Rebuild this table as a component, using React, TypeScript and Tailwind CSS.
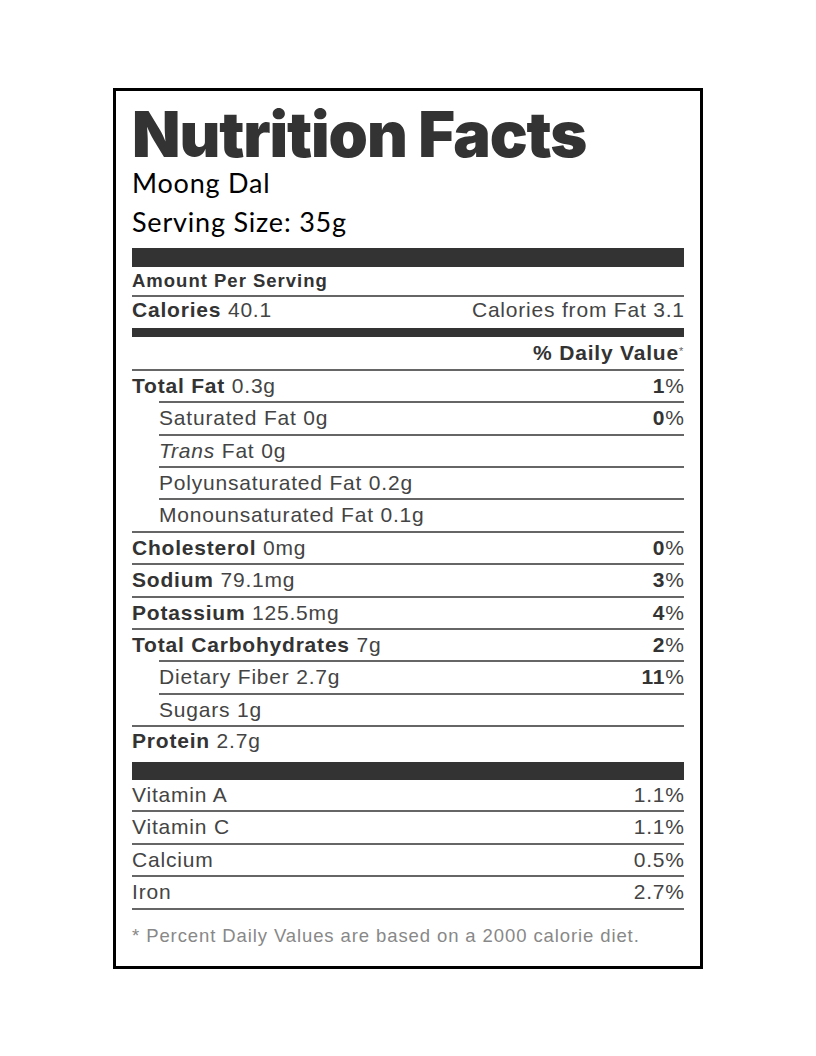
import React from "react";

type Nutrient = {
  label: string;
  amount: string;
  dv?: string;
  bold?: boolean;
  indent?: boolean;
  italicPrefix?: string;
};

const nutrients: Nutrient[] = [
  { label: "Total Fat", amount: "0.3g", dv: "1", bold: true },
  { label: "Saturated Fat", amount: "0g", dv: "0", indent: true },
  { label: "Fat", amount: "0g", indent: true, italicPrefix: "Trans" },
  { label: "Polyunsaturated Fat", amount: "0.2g", indent: true },
  { label: "Monounsaturated Fat", amount: "0.1g", indent: true },
  { label: "Cholesterol", amount: "0mg", dv: "0", bold: true },
  { label: "Sodium", amount: "79.1mg", dv: "3", bold: true },
  { label: "Potassium", amount: "125.5mg", dv: "4", bold: true },
  { label: "Total Carbohydrates", amount: "7g", dv: "2", bold: true },
  { label: "Dietary Fiber", amount: "2.7g", dv: "11", indent: true },
  { label: "Sugars", amount: "1g", indent: true },
];

const vitamins = [
  { label: "Vitamin A", dv: "1.1%" },
  { label: "Vitamin C", dv: "1.1%" },
  { label: "Calcium", dv: "0.5%" },
  { label: "Iron", dv: "2.7%" },
];

const NutrientRow = ({ n }: { n: Nutrient }) => (
  <div
    className={`flex justify-between h-[32.36px] leading-[30.36px] border-t-2 border-[#666] ${
      n.indent ? "ml-[27px]" : ""
    }`}
  >
    <span className="text-[#444]">
      {n.italicPrefix && <i>{n.italicPrefix} </i>}
      {n.bold ? <b className="text-[#333]">{n.label}</b> : n.label} {n.amount}
    </span>
    {n.dv && (
      <span className="-mr-[0.8px]">
        <b className="text-[#333]">{n.dv}</b>
        <span className="text-[#444]">%</span>
      </span>
    )}
  </div>
);

export default function App() {
  return (
    <div className="min-h-[1056px] bg-white pt-[88px]">
      <div className="mx-auto w-[590px] border-[3px] border-black px-[16px] pt-[13px] pb-[18px] font-['Liberation_Sans',Arial,sans-serif] text-[21px] tracking-[0.8px]">
        <h1 className="h-[59px] leading-[60px] text-[63px] font-black tracking-[-1.1px] text-[#333] font-['Inter',sans-serif] whitespace-nowrap">
          Nutrition Facts
        </h1>
        <div className="font-['Lato',sans-serif] text-[27px] leading-[39px] tracking-[0.8px] text-black">
          <div>Moong Dal</div>
          <div>Serving Size: 35g</div>
        </div>

        <div className="mt-[7px] h-[19px] bg-[#333]" />

        <div className="h-[30px] leading-[28px] border-b-2 border-[#666] text-[18.5px] tracking-[1px] font-bold text-[#333]">
          Amount Per Serving
        </div>
        <div className="flex justify-between h-[31px] leading-[26px]">
          <span className="text-[#444]">
            <b className="text-[#333]">Calories</b> 40.1
          </span>
          <span className="text-[#444] -mr-[0.8px]">Calories from Fat 3.1</span>
        </div>
        <div className="h-[9px] bg-[#333]" />

        <div className="flex justify-end h-[32px] leading-[31px] font-bold text-[#333]">
          <span>
            % Daily Value
            <sup className="text-[11px] font-normal text-[#666] relative -top-[5px]">*</sup>
          </span>
        </div>

        {nutrients.map((n) => (
          <NutrientRow key={n.label + (n.italicPrefix ?? "")} n={n} />
        ))}

        <div className="h-[37px] leading-[27px] border-t-2 border-[#666] text-[#444]">
          <b className="text-[#333]">Protein</b> 2.7g
        </div>
        <div className="h-[18px] bg-[#333]" />

        {vitamins.map((v) => (
          <div
            key={v.label}
            className="flex justify-between h-[32.4px] leading-[30px] border-b-2 border-[#666] text-[#444]"
          >
            <span>{v.label}</span>
            <span className="-mr-[0.8px]">{v.dv}</span>
          </div>
        ))}

        <p className="pt-[14px] text-[18.5px] leading-[24px] tracking-[0.9px] text-[#888]">
          * Percent Daily Values are based on a 2000 calorie diet.
        </p>
      </div>
    </div>
  );
}
